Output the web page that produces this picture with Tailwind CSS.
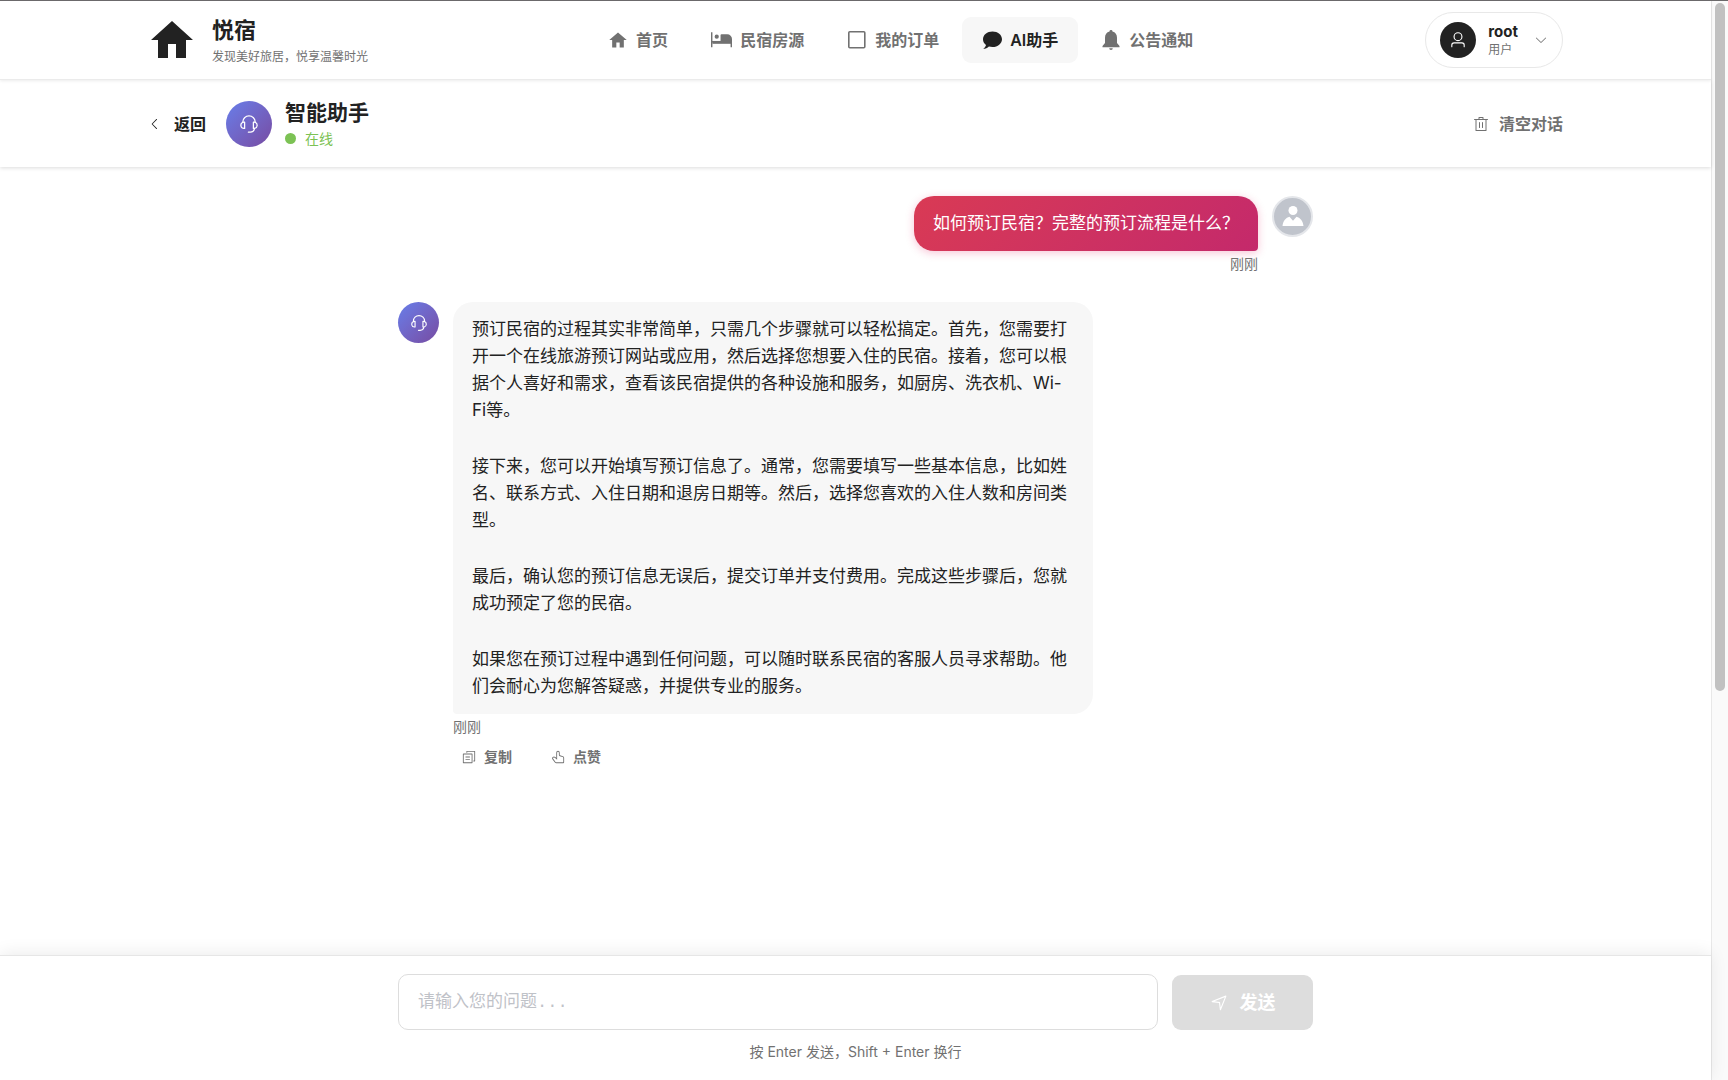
<!DOCTYPE html>
<html lang="zh-CN">
<head>
  <meta charset="UTF-8" />
  <meta name="viewport" content="width=device-width, initial-scale=1" />
  <title>悦宿 - AI助手</title>
  <script src="https://cdn.jsdelivr.net/npm/@tailwindcss/browser@4"></script>
</head>
<body class="flex h-screen overflow-hidden border-t border-[#6b696b] bg-white font-['Inter','Noto_Sans_CJK_SC',sans-serif] text-[#222222]">

  <div class="flex min-w-0 flex-1 flex-col">

    <!-- Navbar -->
    <header class="relative z-20 border-b border-[#ebebeb] bg-white shadow-[0_1px_3px_rgba(0,0,0,0.08)]">
      <div class="mx-auto flex h-[78px] max-w-[1463px] items-center justify-between px-6">
        <a href="#" class="flex items-center gap-4 pr-2">
          <svg class="size-12" viewBox="0 0 24 24" fill="currentColor"><path d="M10 21v-7h4v7h5v-9h3.500L12 2.500 1.500 12H5v9z"/></svg>
          <span class="flex flex-col gap-px">
            <span class="text-[22px] font-bold leading-8">悦宿</span>
            <span class="text-xs leading-5 text-[#717171]">发现美好旅居，悦享温馨时光</span>
          </span>
        </a>

        <nav class="flex items-center gap-[3px] font-semibold text-[#717171]">
          <a href="#" class="flex h-[46px] items-center gap-2 rounded-[9px] px-5">
            <svg class="size-5" viewBox="0 0 24 24" fill="currentColor"><path d="M10 21v-6h4v6h5v-9h3.500L12 3 1.500 12H5v9z"/></svg>
            首页
          </a>
          <a href="#" class="flex h-[46px] items-center gap-2 rounded-[9px] px-5">
            <svg class="h-5 w-[21px]" viewBox="0 0 22 20" fill="currentColor"><path d="M0 2h1.500v10.500H20.500V17.500H22V9a5 5 0 0 0-5-5h-6a1 1 0 0 0-1 1v6H1.500V17.500H0z"/><path d="M1.500 11H22v3H1.500z"/><circle cx="6" cy="6.500" r="2.200"/></svg>
            民宿房源
          </a>
          <a href="#" class="flex h-[46px] items-center gap-2 rounded-[9px] px-5">
            <svg class="size-5" viewBox="0 0 20 20" fill="none" stroke="currentColor" stroke-width="1.600"><rect x="1.800" y="1.800" width="16" height="16" rx="1"/></svg>
            我的订单
          </a>
          <a href="#" class="flex h-[46px] items-center gap-2 rounded-[9px] bg-[#f7f7f7] px-5 text-[#222222]">
            <svg class="size-5" viewBox="0 0 20 20" fill="currentColor"><path d="M10.500 1.500C5.200 1.500 1 4.900 1 9.200c0 2.300 1.100 4.300 3 5.700-.3 1.300-1.200 2.700-2.800 3.900 2.300 0 4.300-.9 5.700-2.300 1.100.3 2.300.5 3.600.5 5.300 0 9.500-3.500 9.500-7.800s-4.200-7.700-9.500-7.700z"/></svg>
            AI助手
          </a>
          <a href="#" class="flex h-[46px] items-center gap-2 rounded-[9px] px-5">
            <svg class="size-5" viewBox="0 0 20 20" fill="currentColor"><path d="M10 0a1.500 1.500 0 0 0-1.500 1.600C5.600 2.300 4 4.800 4 7.700v5.200L1.500 16v1.300h17V16L16 12.900V7.700c0-2.900-1.600-5.400-4.500-6.100A1.500 1.500 0 0 0 10 0zM8.200 18.200a1.800 1.800 0 0 0 3.600 0z"/></svg>
            公告通知
          </a>
        </nav>

        <button type="button" class="flex h-14 items-center rounded-full border border-[#e8e8e8] pl-[14px] pr-[14px] text-left">
          <span class="flex size-9 items-center justify-center rounded-full bg-[#222222] text-white">
            <svg class="size-[18px]" viewBox="0 0 1024 1024" fill="currentColor"><path d="M512 512a192 192 0 1 0 0-384 192 192 0 0 0 0 384m0 64a256 256 0 1 1 0-512 256 256 0 0 1 0 512m320 320v-96a96 96 0 0 0-96-96H288a96 96 0 0 0-96 96v96a32 32 0 1 1-64 0v-96a160 160 0 0 1 160-160h448a160 160 0 0 1 160 160v96a32 32 0 1 1-64 0"/></svg>
          </span>
          <span class="ml-3 flex flex-col">
            <span class="text-[15px] font-bold leading-5">root</span>
            <span class="text-xs leading-4 text-[#717171]">用户</span>
          </span>
          <svg class="ml-4 size-[14px] text-[#717171]" viewBox="0 0 1024 1024" fill="currentColor"><path d="M831.872 340.864 512 652.672 192.128 340.864a30.592 30.592 0 0 0-42.752 0 29.120 29.120 0 0 0 0 41.600L489.664 714.240a32 32 0 0 0 44.672 0l340.288-331.712a29.120 29.120 0 0 0 0-41.728 30.592 30.592 0 0 0-42.752 0z"/></svg>
        </button>
      </div>
    </header>

    <!-- Chat header -->
    <div class="relative z-10 bg-white shadow-[0_1px_4px_rgba(0,0,0,0.14)]">
      <div class="mx-auto flex h-[87px] max-w-[1463px] items-center justify-between px-6">
        <div class="flex items-center">
          <button type="button" class="flex items-center gap-3 font-semibold">
            <svg class="size-[14px]" viewBox="0 0 1024 1024" fill="currentColor"><path d="M609.408 149.376 277.760 489.600a32 32 0 0 0 0 44.672l331.648 340.352a29.120 29.120 0 0 0 41.728 0 30.592 30.592 0 0 0 0-42.752L339.264 511.936l311.872-319.872a30.592 30.592 0 0 0 0-42.688 29.120 29.120 0 0 0-41.728 0z"/></svg>
            返回
          </button>
          <span class="ml-5 flex size-[46px] items-center justify-center rounded-full bg-linear-135 from-[#667eea] to-[#764ba2] text-white">
            <svg class="size-5" viewBox="0 0 1024 1024" fill="currentColor"><path d="M864 409.600a192 192 0 0 1-37.888 349.440A256.064 256.064 0 0 1 576 960h-96a32 32 0 1 1 0-64h96a192.064 192.064 0 0 0 181.120-128H736a32 32 0 0 1-32-32V416a32 32 0 0 1 32-32h32c10.368 0 20.544.832 30.528 2.432a288 288 0 0 0-573.056 0A193 193 0 0 1 256 384h32a32 32 0 0 1 32 32v320a32 32 0 0 1-32 32h-32a192 192 0 0 1-96-358.400 352 352 0 0 1 704 0M256 448a128 128 0 1 0 0 256zm640 128a128 128 0 0 0-128-128v256a128 128 0 0 0 128-128"/></svg>
          </span>
          <div class="ml-[13px]">
            <h1 class="text-[21px] font-semibold leading-[30px]">智能助手</h1>
            <div class="flex items-center gap-[9px] text-sm leading-[22px] text-[#7cc254]">
              <span class="size-[11px] rounded-full bg-[#7cc254]"></span>
              在线
            </div>
          </div>
        </div>
        <button type="button" class="flex items-center gap-[10px] font-semibold text-[#717171]">
          <svg class="size-4" viewBox="0 0 1024 1024" fill="currentColor"><path d="M160 256H96a32 32 0 0 1 0-64h256V95.936a32 32 0 0 1 32-32h256a32 32 0 0 1 32 32V192h256a32 32 0 1 1 0 64h-64v672a32 32 0 0 1-32 32H192a32 32 0 0 1-32-32zm448-64v-64H416v64zM224 896h576V256H224zm192-128a32 32 0 0 1-32-32V416a32 32 0 0 1 64 0v320a32 32 0 0 1-32 32m192 0a32 32 0 0 1-32-32V416a32 32 0 0 1 64 0v320a32 32 0 0 1-32 32"/></svg>
          清空对话
        </button>
      </div>
    </div>

    <!-- Messages -->
    <main class="min-h-0 flex-1 overflow-hidden px-6 pt-[29px]">
      <div class="mx-auto flex max-w-[915px] flex-col gap-7">

        <div class="flex items-start justify-end gap-[14px]">
          <div class="flex flex-col items-end">
            <div class="rounded-[20px] rounded-br-[4px] bg-linear-135 from-[#d93a54] to-[#c4296b] px-[19px] py-[14px] text-[17px] leading-[27px] text-white shadow-[0_2px_8px_rgba(227,28,95,0.25)]">如何预订民宿？完整的预订流程是什么？</div>
            <time class="mt-[3px] text-sm leading-5 text-[#717171]">刚刚</time>
          </div>
          <span class="flex size-[41px] shrink-0 items-center justify-center rounded-full border-2 border-[#e4e6ea] bg-[#c0c4cc] text-white">
            <svg class="size-6" viewBox="0 0 24 24" fill="currentColor"><circle cx="12" cy="5.500" r="4.500"/><path d="M1.500 21c.5-5 3.500-8.500 7-9.200L12 15.800l3.500-4c3.500.7 6.500 4.200 7 9.200z"/></svg>
          </span>
        </div>

        <div class="flex items-start gap-[14px]">
          <span class="flex size-[41px] shrink-0 items-center justify-center rounded-full bg-linear-135 from-[#667eea] to-[#764ba2] text-white">
            <svg class="size-[18px]" viewBox="0 0 1024 1024" fill="currentColor"><path d="M864 409.600a192 192 0 0 1-37.888 349.440A256.064 256.064 0 0 1 576 960h-96a32 32 0 1 1 0-64h96a192.064 192.064 0 0 0 181.120-128H736a32 32 0 0 1-32-32V416a32 32 0 0 1 32-32h32c10.368 0 20.544.832 30.528 2.432a288 288 0 0 0-573.056 0A193 193 0 0 1 256 384h32a32 32 0 0 1 32 32v320a32 32 0 0 1-32 32h-32a192 192 0 0 1-96-358.400 352 352 0 0 1 704 0M256 448a128 128 0 1 0 0 256zm640 128a128 128 0 0 0-128-128v256a128 128 0 0 0 128-128"/></svg>
          </span>
          <div class="max-w-[640px]">
            <div class="flex flex-col gap-[29px] rounded-[20px] rounded-bl-[4px] bg-[#f7f7f7] px-[19px] py-[14px] text-[17px] leading-[27px]">
              <p>预订民宿的过程其实非常简单，只需几个步骤就可以轻松搞定。首先，您需要打开一个在线旅游预订网站或应用，然后选择您想要入住的民宿。接着，您可以根据个人喜好和需求，查看该民宿提供的各种设施和服务，如厨房、洗衣机、Wi-Fi等。</p>
              <p>接下来，您可以开始填写预订信息了。通常，您需要填写一些基本信息，比如姓名、联系方式、入住日期和退房日期等。然后，选择您喜欢的入住人数和房间类型。</p>
              <p>最后，确认您的预订信息无误后，提交订单并支付费用。完成这些步骤后，您就成功预定了您的民宿。</p>
              <p>如果您在预订过程中遇到任何问题，可以随时联系民宿的客服人员寻求帮助。他们会耐心为您解答疑惑，并提供专业的服务。</p>
            </div>
            <time class="mt-[3px] block text-sm leading-5 text-[#717171]">刚刚</time>
            <div class="mt-[5px] flex gap-[21px] text-sm font-semibold text-[#717171]">
              <button type="button" class="flex h-[30px] items-center gap-2 px-[9px]">
                <svg class="size-[14px]" viewBox="0 0 1024 1024" fill="currentColor"><path d="M128 320v576h576V320zm-32-64h640a32 32 0 0 1 32 32v640a32 32 0 0 1-32 32H96a32 32 0 0 1-32-32V288a32 32 0 0 1 32-32M960 96v704a32 32 0 0 1-32 32h-96v-64h64V128H384v64h-64V96a32 32 0 0 1 32-32h576a32 32 0 0 1 32 32M256 672h320v64H256zm0-192h320v64H256z"/></svg>
                复制
              </button>
              <button type="button" class="flex h-[30px] items-center gap-2 px-[9px]">
                <svg class="size-[14px]" viewBox="0 0 1024 1024" fill="currentColor"><path d="M511.552 128c-35.584 0-64.384 28.800-64.384 64.448v516.480L274.048 570.880a94.272 94.272 0 0 0-112.896-3.456 44.416 44.416 0 0 0-8.960 62.208L332.800 870.400A64 64 0 0 0 384 896h512V575.232a64 64 0 0 0-45.632-61.312l-205.952-61.760A96 96 0 0 1 576 360.192V192.448C576 156.800 547.200 128 511.552 128M359.040 556.800l24.128 19.200V192.448a128.448 128.448 0 1 1 256.832 0v167.744a32 32 0 0 0 22.784 30.656l206.016 61.760A128 128 0 0 1 960 575.232V896a64 64 0 0 1-64 64H384a128 128 0 0 1-102.400-51.200L101.056 668.032A108.416 108.416 0 0 1 128 512.512a158.272 158.272 0 0 1 185.984 8.320z"/></svg>
                点赞
              </button>
            </div>
          </div>
        </div>

      </div>
    </main>

    <!-- Input -->
    <footer class="relative z-10 border-t border-[#e6e6e6] bg-white px-6 pb-[18px] pt-[18px] shadow-[0_-2px_16px_rgba(0,0,0,0.08)]">
      <form class="mx-auto max-w-[915px]">
        <div class="flex items-end gap-[14px]">
          <textarea rows="1" aria-label="请输入您的问题" placeholder="请输入您的问题..." class="h-14 flex-1 resize-none overflow-hidden rounded-[10px] border border-[#dddddd] px-[19px] py-[14px] font-['Liberation_Mono','Noto_Sans_CJK_SC',monospace] text-[17px] leading-[27px] placeholder:text-[#bfc2c8] focus:outline-none"></textarea>
          <button type="submit" disabled class="flex h-[55px] w-[141px] items-center justify-center gap-3 rounded-[9px] bg-[#dddddd] text-lg font-semibold text-white">
            <svg class="size-[18px]" viewBox="0 0 1024 1024" fill="currentColor"><path d="m249.600 417.088 319.744 43.072 39.168 310.272L845.120 178.880zm-129.024 47.168a32 32 0 0 1-7.680-61.440l777.792-311.040a32 32 0 0 1 41.600 41.600l-310.336 775.680a32 32 0 0 1-61.440-7.808L512 516.992z"/></svg>
            发送
          </button>
        </div>
        <p class="mt-3 text-center text-sm leading-5 text-[#717171]">按 Enter 发送，Shift + Enter 换行</p>
      </form>
    </footer>
  </div>

  <!-- Scrollbar -->
  <div class="w-[17px] shrink-0 border-l border-[#e8e8e8] bg-[#fafafa] py-[2px] pl-[3px] pr-[3px]">
    <div class="h-[64%] rounded-full bg-[#c1c1c1]"></div>
  </div>

</body>
</html>
